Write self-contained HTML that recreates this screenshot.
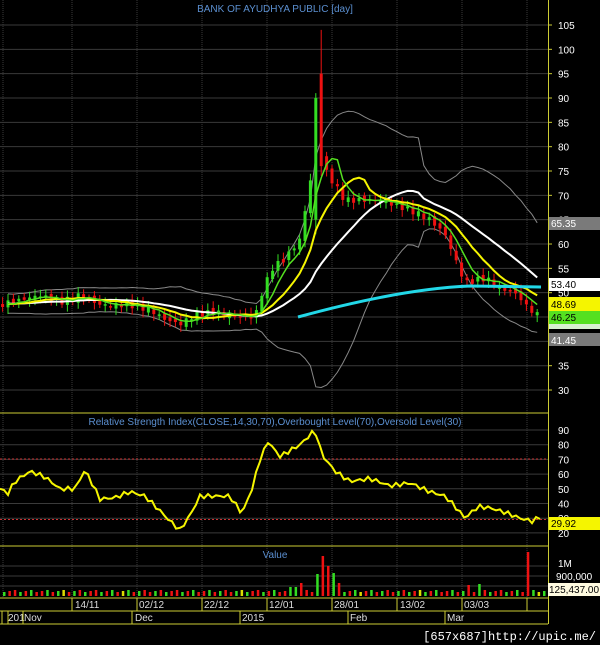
<!DOCTYPE html>
<html><head><meta charset="utf-8"><style>
body{margin:0;background:#000;width:600px;height:645px;overflow:hidden}
svg{display:block;font-family:"Liberation Sans",sans-serif}
</style></head><body>
<svg id="s" width="600" height="645" viewBox="0 0 600 645" xmlns="http://www.w3.org/2000/svg">
<rect width="600" height="645" fill="#000"/>
<g id="grid" stroke="#3a3a3a" stroke-width="1"></g>
<text x="275" y="12" fill="#5b8fd0" font-size="10" text-anchor="middle">BANK OF AYUDHYA PUBLIC [day]</text>
<g id="main"></g>
<!-- panel separators -->
<line x1="0" y1="413" x2="548" y2="413" stroke="#cccc33"/>
<line x1="0" y1="546" x2="548" y2="546" stroke="#cccc33"/>
<line x1="0" y1="598" x2="548" y2="598" stroke="#cccc33"/>
<line x1="0" y1="611" x2="548" y2="611" stroke="#cccc33"/>
<line x1="0" y1="624" x2="548" y2="624" stroke="#cccc33"/>
<line x1="548.5" y1="0" x2="548.5" y2="624" stroke="#cccc33"/>
<text x="275" y="425" fill="#5b8fd0" font-size="10" text-anchor="middle">Relative Strength Index(CLOSE,14,30,70),Overbought Level(70),Oversold Level(30)</text>
<line x1="0" y1="459" x2="548" y2="459" stroke="#c33" stroke-dasharray="2,2"/>
<line x1="0" y1="519.5" x2="548" y2="519.5" stroke="#c33" stroke-dasharray="2,2"/>
<polyline id="rsi" fill="none" stroke="#f5f500" stroke-width="2"/>
<text x="275" y="558" fill="#5b8fd0" font-size="10" text-anchor="middle">Value</text>
<g id="vol"></g>
<g id="axis" fill="#fff" font-size="10"></g>
<g font-size="10" fill="#fff">
<rect x="549" y="217" width="51" height="13" fill="#7a7a7a"/><text x="551" y="227">65.35</text>
<rect x="549" y="278" width="51" height="13" fill="#fff"/><text x="551" y="288" fill="#000">53.40</text>
<rect x="549" y="297" width="51" height="14" fill="#f5f500"/><text x="551" y="308" fill="#000">48.69</text>
<rect x="549" y="311" width="51" height="13" fill="#55e020"/><text x="551" y="321" fill="#000">46.25</text>
<rect x="549" y="324" width="51" height="5" fill="#d8f0d0"/>
<rect x="549" y="333" width="51" height="13" fill="#7a7a7a"/><text x="551" y="344">41.45</text>
<rect x="549" y="517" width="51" height="13" fill="#f5f500"/><text x="551" y="527" fill="#000">29.92</text>
<rect x="548" y="583" width="52" height="13" fill="#fffbe0"/><text x="549" y="593" fill="#000">125,437.00</text>
</g>
<g font-size="10" fill="#ddd">
<text x="75" y="608">14/11</text><text x="139" y="608">02/12</text><text x="204" y="608">22/12</text><text x="269" y="608">12/01</text><text x="334" y="608">28/01</text><text x="400" y="608">13/02</text><text x="464" y="608">03/03</text>
<text x="8" y="621">201</text><text x="24" y="621">Nov</text><text x="135" y="621">Dec</text><text x="242" y="621">2015</text><text x="350" y="621">Feb</text><text x="447" y="621">Mar</text>
</g>
<g stroke="#cccc33">
<line x1="72" y1="598" x2="72" y2="611"/><line x1="137" y1="598" x2="137" y2="611"/><line x1="202" y1="598" x2="202" y2="611"/><line x1="267" y1="598" x2="267" y2="611"/><line x1="332" y1="598" x2="332" y2="611"/><line x1="397" y1="598" x2="397" y2="611"/><line x1="462" y1="598" x2="462" y2="611"/><line x1="527" y1="598" x2="527" y2="611"/>
<line x1="2" y1="611" x2="2" y2="624"/><line x1="8" y1="611" x2="8" y2="624"/><line x1="23" y1="611" x2="23" y2="624"/><line x1="132" y1="611" x2="132" y2="624"/><line x1="240" y1="611" x2="240" y2="624"/><line x1="348" y1="611" x2="348" y2="624"/><line x1="445" y1="611" x2="445" y2="624"/>
</g>
<text x="596" y="640" fill="#fff" font-size="12" text-anchor="end" font-family="Liberation Mono,monospace">[657x687]http://upic.me/</text>
</svg>
<script>
var NS="http://www.w3.org/2000/svg";
function el(p,t,a){var e=document.createElementNS(NS,t);for(var k in a)e.setAttribute(k,a[k]);document.getElementById(p).appendChild(e);return e;}
function Y(p){return 25+(105-p)*4.867;}
// grid
[3,72,137,202,267,332,397,462,527].forEach(function(x){el("grid","line",{x1:x,y1:0,x2:x,y2:598,"stroke-dasharray":"1,1"});});
for(var p=30;p<=105;p+=5){var y=Y(p);el("grid","line",{x1:0,y1:y,x2:548,y2:y});el("axis","text",{x:558,y:y+4}).textContent=p;el("axis","line",{x1:548,y1:y,x2:552,y2:y,stroke:"#cccc33"});}
[90,80,70,60,50,40,30,20].forEach(function(v){var y=430+(90-v)*1.47;el("grid","line",{x1:0,y1:y,x2:548,y2:y});el("axis","text",{x:558,y:y+4}).textContent=v;});
el("grid","line",{x1:0,y1:576,x2:548,y2:576});el("grid","line",{x1:0,y1:586,x2:548,y2:586});el("grid","line",{x1:0,y1:566,x2:548,y2:566});
el("axis","text",{x:558,y:567}).textContent="1M";el("axis","text",{x:556,y:580}).textContent="900,000";
function interp(k,x){for(var i=1;i<k.length;i++)if(x<=k[i][0]){var a=k[i-1],b=k[i];return a[1]+(b[1]-a[1])*(x-a[0])/(b[0]-a[0]);}return k[k.length-1][1];}
var K=[[-100,48],[0,47.5],[20,48.5],[40,49.5],[60,48],[80,49.5],[100,47.5],[130,47.5],[150,46.5],[165,44.5],[180,43.5],[195,45.5],[215,46],[240,45],[255,45],[262,50],[272,55],[285,57],[300,61],[312,75],[316,90],[321,78],[326,75],[335,72],[345,69],[380,69],[410,67],[430,65],[445,62],[455,57],[465,52],[485,53],[500,51],[515,50],[530,46.5],[541,45]];
var st=5.4,xs=[],cl=[];
for(var x=-100;x<=541;x+=st){xs.push(x);cl.push(interp(K,x)+Math.sin(x*1.7)*0.6);}
function ma(n,i){var s=0;for(var j=i-n+1;j<=i;j++)s+=cl[j];return s/n;}
var up=[],dn=[],w=[],yl=[],gr=[],cy=[];
for(var i=20;i<xs.length;i++){var x=xs[i];if(x<0)continue;var m=ma(20,i),sd=0;for(var j=i-19;j<=i;j++)sd+=(cl[j]-m)*(cl[j]-m);sd=Math.sqrt(sd/20);
up.push(x+","+Y(m+2*sd+1));dn.push(x+","+Y(m-2*sd-1));w.push(x+","+Y(m));yl.push(x+","+Y(ma(10,i)));gr.push(x+","+Y(ma(5,i)));}
el("main","polyline",{points:up.join(" "),fill:"none",stroke:"#888","stroke-width":1});
el("main","polyline",{points:dn.join(" "),fill:"none",stroke:"#888","stroke-width":1});
// candles
for(var i=1;i<xs.length;i++){var x=xs[i];if(x<0)continue;var o=cl[i-1]+Math.cos(x)*0.5,c=cl[i];var col=c>=o?"#33dd22":"#ee1111";var hi=Math.max(o,c)+0.6+Math.abs(Math.sin(x*3))*0.8,lo=Math.min(o,c)-0.6-Math.abs(Math.cos(x*2))*0.8;
if(x>312&&x<318){hi=91;lo=62;o=65;c=90;col="#33dd22";}if(x>318&&x<324){hi=104;lo=74;o=95;c=76;col="#ee1111";}
el("main","line",{x1:x,y1:Y(hi),x2:x,y2:Y(lo),stroke:col});el("main","rect",{x:x-1.5,y:Y(Math.max(o,c)),width:3,height:Math.max(1.5,Math.abs(Y(o)-Y(c))),fill:col});}
el("main","polyline",{points:w.join(" "),fill:"none",stroke:"#fff","stroke-width":2});
el("main","polyline",{points:yl.join(" "),fill:"none",stroke:"#f5f500","stroke-width":2});
el("main","polyline",{points:gr.join(" "),fill:"none",stroke:"#55e020","stroke-width":1.5});
el("main","path",{d:"M298,317 C360,300 420,288 470,286 L541,287",fill:"none",stroke:"#22d8e8","stroke-width":3});
// rsi
var R=[[0,50],[8,47],[15,55],[30,62],[45,58],[60,50],[75,50],[85,63],[100,43],[115,44],[130,48],[145,45],[160,35],[170,28],[180,22],[190,32],[200,45],[230,45],[242,33],[252,50],[260,70],[268,82],[280,72],[295,78],[300,80],[315,90],[322,73],[335,62],[350,55],[370,57],[390,52],[410,54],[430,48],[445,45],[455,38],[465,30],[478,38],[490,37],[505,34],[520,30],[532,28],[541,31]];
var rp=[];for(var x=0;x<=541;x+=4)rp.push(x+","+(430+(90-interp(R,x)+Math.sin(x*0.9)*1.5)*1.47));
document.getElementById("rsi").setAttribute("points",rp.join(" "));
// volume
for(var x=3,i=0;x<545;x+=5.4,i++){var h=4+(i%3);var col=(i*7%5<2)?"#33dd22":((i%11==0)?"#dddd00":"#ee1111");
if(Math.abs(x-298)<3){h=13;col="#ee1111";}if(Math.abs(x-292)<3){h=9;col="#33dd22";}if(Math.abs(x-314)<3){h=22;col="#33dd22";}
if(Math.abs(x-320)<3){h=40;col="#ee1111";}if(Math.abs(x-325)<3){h=30;col="#ee1111";}if(Math.abs(x-330)<3){h=23;col="#33dd22";}if(Math.abs(x-336)<3){h=13;col="#ee1111";}
if(Math.abs(x-468)<3){h=11;col="#ee1111";}if(Math.abs(x-478)<3){h=12;col="#33dd22";}if(Math.abs(x-527)<3){h=44;col="#ee1111";}
el("vol","rect",{x:x,y:596-h,width:2.5,height:h,fill:col});}
</script>
</body></html>
